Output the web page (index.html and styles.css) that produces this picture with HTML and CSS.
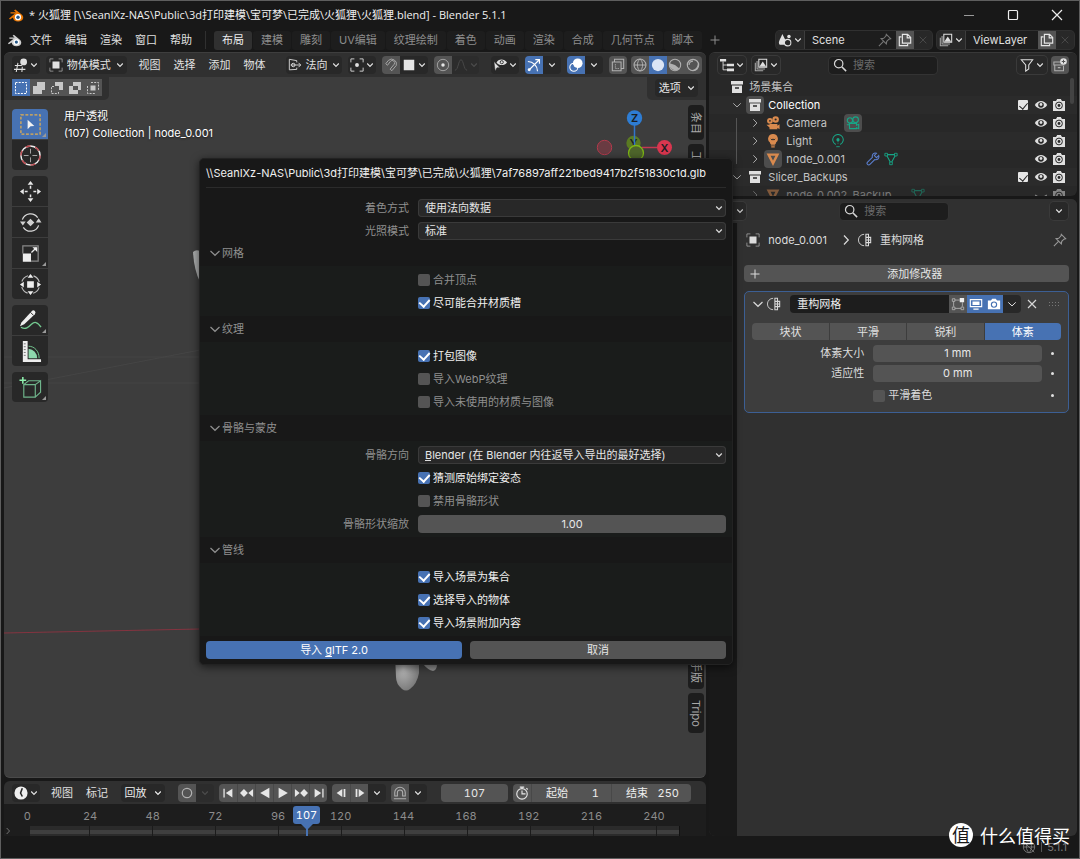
FILE: index.html
```html
<!DOCTYPE html>
<html lang="zh-CN">
<head>
<meta charset="utf-8">
<meta name="viewport" content="width=device-width, initial-scale=1">
<title>火狐狸.blend - Blender 5.1.1</title>
<link rel="stylesheet" href="styles.css">
</head>
<body>
<svg class="sprite" aria-hidden="true">
  <symbol id="chev" viewBox="0 0 8 8"><path d="M1.2 2.5 4 5.3 6.8 2.5" fill="none" stroke="currentColor" stroke-width="1.2"/></symbol>
  <symbol id="chevd" viewBox="0 0 12 12"><path d="M1.5 4 6 8.3 10.500 4" fill="none" stroke="currentColor" stroke-width="1.2"/></symbol>
  <symbol id="chevr" viewBox="0 0 12 12"><path d="M4 1.500 8.300 6 4 10.500" fill="none" stroke="currentColor" stroke-width="1.2"/></symbol>
  <symbol id="logo" viewBox="0 0 16 14"><path d="M1 10.500 7 5.600H2.500V4.300h5.600L6 2.500 7.300 1.500l5.800 4.600c1.500 1.200 2.300 2.400 2.100 4-.3 2.200-2.400 3.500-5.100 3.500-2.900 0-5-1.600-5.100-4L2 11.600z" fill="currentColor"/><circle class="logo-ring" cx="10" cy="9.200" r="3.100"/><circle class="logo-eye" cx="10" cy="9.200" r="1.700"/></symbol>
  <symbol id="editor3d" viewBox="0 0 16 16"><path d="M1 8.500h8M0 13h13M4.500 5.500 2.500 16M9.500 10 9 16" fill="none" stroke="currentColor" stroke-width="1.200"/><circle cx="11" cy="4.500" r="3.900" fill="currentColor"/></symbol>
  <symbol id="objmode" viewBox="0 0 16 16"><path d="M1 5V1h4M11 1h4v4M15 11v4h-4M5 15H1v-4" fill="none" stroke="currentColor" opacity=".6"/><rect x="4" y="4" width="8" height="8" fill="currentColor"/></symbol>
  <symbol id="orient" viewBox="0 0 16 16"><path d="M10 5V3L1.500 1.500v12L10 13v-2M3 8h11.500M12 5.500 14.500 8 12 10.500" fill="none" stroke="currentColor"/><circle cx="6" cy="8" r="2" fill="none" stroke="currentColor"/></symbol>
  <symbol id="pivot" viewBox="0 0 16 16"><path d="M1 5V1h4M11 1h4v4M15 11v4h-4M5 15H1v-4" fill="none" stroke="currentColor"/><circle cx="8" cy="8" r="2.200" fill="currentColor"/></symbol>
  <symbol id="magnet" viewBox="0 0 16 16"><path d="M2 6.500 5 2.800a5.500 5.500 0 0 1 9 5.700l-5 6-2-1.700 4.600-5.600a2.700 2.700 0 0 0-4.300-3.300L4 8.300z" fill="none" stroke="currentColor"/></symbol>
  <symbol id="square" viewBox="0 0 16 16"><rect x="2" y="2" width="12" height="12" fill="#e6e6e6"/></symbol>
  <symbol id="prop" viewBox="0 0 16 16"><circle cx="8" cy="8" r="6.500" fill="none" stroke="currentColor" opacity=".6"/><circle cx="8" cy="8" r="2" fill="currentColor"/></symbol>
  <symbol id="bell" viewBox="0 0 16 16"><path d="M1 14c4 0 4-12 7-12s3 12 7 12" fill="none" stroke="currentColor"/></symbol>
  <symbol id="vis" viewBox="0 0 16 16"><path d="M4 5c2-4.500 9-4.500 12 0-3 4-9 4-12 0z" fill="currentColor"/><circle cx="10" cy="4.800" r="1.800" fill="none" stroke="#282828"/><path d="M1 4l7 7-3.500.2L2.500 15z" fill="currentColor" stroke="#282828" stroke-width=".6"/></symbol>
  <symbol id="gizmo" viewBox="0 0 16 16"><path d="M1 4c6 0 11 5 11 11M2 14 14 2M9.500 1.800H14.200V6.500" fill="none" stroke="currentColor" stroke-width="1.300"/><circle cx="2.500" cy="13.500" r="1.700" fill="currentColor"/></symbol>
  <symbol id="overlay" viewBox="0 0 16 16"><circle cx="10" cy="6" r="5.500" fill="currentColor"/><circle cx="5.500" cy="10.500" r="4.600" fill="none" stroke="currentColor" stroke-width="1.200"/><path d="M5 8.500a3 3 0 0 0 3.500 3" stroke="#4772b3" fill="none"/></symbol>
  <symbol id="xray" viewBox="0 0 16 16"><path d="M4 4V1.500h10.500V12H12M1.500 4.500H11.500v10H1.500z" fill="none" stroke="currentColor" stroke-width="1.200"/><path d="M5 7v5h4" fill="none" stroke="currentColor" stroke-dasharray="1.500 1"/></symbol>
  <symbol id="wire" viewBox="0 0 16 16"><circle cx="8" cy="8" r="6.800" fill="none" stroke="currentColor" stroke-width="1.200"/><path d="M1 8h14M8 1C4 5 4 11 8 15M8 1c4 4 4 10 0 14" fill="none" stroke="currentColor" stroke-width="1.100"/></symbol>
  <symbol id="solid" viewBox="0 0 16 16"><circle cx="8" cy="8" r="7" fill="#dbe5f5"/></symbol>
  <symbol id="matl" viewBox="0 0 16 16"><circle cx="8" cy="8" r="6.500" fill="none" stroke="currentColor" stroke-width="1.200"/><path d="M8 1.500v6.500l5 4A6.500 6.500 0 0 1 2 6L8 8z" fill="currentColor"/></symbol>
  <symbol id="rend" viewBox="0 0 16 16"><circle cx="8" cy="8" r="6.500" fill="none" stroke="currentColor" stroke-width="1.300"/><path d="M3.500 8A4.500 4.500 0 0 1 8 3.500" fill="none" stroke="currentColor" stroke-width="1.300"/><path d="M13.500 6a6 6 0 0 1-8 8c4 0 8-3 8-8z" fill="currentColor"/></symbol>
  <symbol id="scene" viewBox="0 0 16 16"><path d="M5 1 9 9a4 4 0 0 1-2 4.500H2C-.5 11 2 8 5 1z" fill="currentColor"/><circle cx="11" cy="11" r="3.700" fill="#282828" stroke="currentColor" stroke-width="1.200"/><circle cx="12.500" cy="4" r="2" fill="currentColor"/></symbol>
  <symbol id="pin" viewBox="0 0 16 16"><path d="M9.500 1.500 14.500 6.500 12.500 7 10 9.500 9.500 12.500 3.500 6.500 6.500 6 9 3.500zM6 9.800 1 15" fill="none" stroke="currentColor" stroke-width="1.200"/></symbol>
  <symbol id="copy" viewBox="0 0 16 16"><path d="M5 1.500h6l3.500 3.500v6.500H5zM10.500 1.500V5.500h4" fill="none" stroke="currentColor" stroke-width="1.300"/><path d="M4 4.500H1.500v10H11v-2" fill="none" stroke="currentColor" stroke-width="1.300"/></symbol>
  <symbol id="close" viewBox="0 0 12 12"><path d="m2 2 8 8M10 2l-8 8" fill="none" stroke="currentColor" stroke-width="1.200"/></symbol>
  <symbol id="layers" viewBox="0 0 16 16"><path d="M1.500 5.500v9h9M3.500 3.500v9h9" fill="none" stroke="currentColor" stroke-width="1.200" opacity=".7"/><path d="M5.500 1.500h9v9h-9z" fill="none" stroke="currentColor" stroke-width="1.200"/><path d="M6 10l4-6 4 6z" fill="currentColor"/></symbol>
  <symbol id="tree" viewBox="0 0 16 16"><path d="M0 1h7v3H0zM8 6.500h8v3H8zM8 12h8v3H8z" fill="currentColor"/><path d="M3.500 4v9.500H8M3.500 8H8" fill="none" stroke="currentColor"/></symbol>
  <symbol id="search" viewBox="0 0 16 16"><circle cx="6.500" cy="6.500" r="4.800" fill="none" stroke="currentColor" stroke-width="1.400"/><path d="m10 10 5 5" stroke="currentColor" stroke-width="1.700"/></symbol>
  <symbol id="filter" viewBox="0 0 16 16"><path d="M1.500 2h13L10 8v4.500L6.500 15V8z" fill="none" stroke="currentColor" stroke-width="1.200"/></symbol>
  <symbol id="coll" viewBox="0 0 14 14"><path d="M1 1h12v3.500H1zM2 5.500h10V13H2z" fill="currentColor"/><path d="M5 8h4" stroke="#282828" stroke-width="1.300"/></symbol>
  <symbol id="newcoll" viewBox="0 0 16 16"><path d="M9 4.500H1V8h12M2 8v6.500h10V9M5.500 11h3" fill="none" stroke="currentColor" stroke-width="1.200"/><circle cx="12" cy="4" r="3.800" fill="#e0e0e0"/><path d="M12 2v4M10 4h4" stroke="#545454" stroke-width="1.200"/></symbol>
  <symbol id="eye" viewBox="0 0 14 14"><path d="M.8 7C4 1.800 10 1.800 13.200 7 10 12 4 12 .8 7z" fill="currentColor"/><circle cx="7" cy="7" r="2.800" fill="#282828"/><circle cx="7" cy="6.500" r="1.400" fill="currentColor"/></symbol>
  <symbol id="cam" viewBox="0 0 14 14"><path d="M1 3h3l1.200-2h3.600L10 3h3v10H1z" fill="currentColor"/><circle cx="7" cy="7.500" r="3.400" fill="none" stroke="#282828"/><circle cx="7" cy="7.500" r="1.400" fill="#282828"/></symbol>
  <symbol id="movie" viewBox="0 0 16 16"><circle cx="4.500" cy="5.500" r="3.300" fill="currentColor"/><circle cx="11" cy="4" r="3.700" fill="currentColor"/><circle cx="4.500" cy="5.500" r="1" fill="#282828"/><circle cx="11" cy="4" r="1.200" fill="#282828"/><path d="M4 9h9v2l2.500-1.500v5.500L13 13.500v1.500H4zM.500 10H4v3z" fill="currentColor"/></symbol>
  <symbol id="movieo" viewBox="0 0 16 16"><circle cx="4.500" cy="5" r="3" fill="none" stroke="currentColor" stroke-width="1.300"/><circle cx="11" cy="4.200" r="3.200" fill="none" stroke="currentColor" stroke-width="1.300"/><path d="M4 8.500h8v2l2.500-1v5L12 13.500v1H4zM1 10h3" fill="none" stroke="currentColor" stroke-width="1.300"/></symbol>
  <symbol id="bulb" viewBox="0 0 16 16"><path d="M8 0a5.500 5.500 0 0 1 3.500 9.800L11 11.500H5L4.500 9.800A5.500 5.500 0 0 1 8 0z" fill="currentColor"/><path d="M5.500 12.500h5M6 14.800h4" stroke="currentColor" stroke-width="1.400"/><path d="M5.500 5.500 7 7l1-1.500L9 7l1.500-1.500" fill="none" stroke="#282828"/></symbol>
  <symbol id="lightd" viewBox="0 0 16 16"><path d="M5.500 12a6 6 0 1 1 5 0" fill="none" stroke="currentColor" stroke-width="1.200"/><circle cx="8" cy="6.500" r="1.800" fill="currentColor"/><path d="M8 8v3" stroke="currentColor" stroke-dasharray="1 1"/><path d="M6 14.500h4" stroke="currentColor"/></symbol>
  <symbol id="mesh" viewBox="0 0 16 16"><path d="M3 3h10L8 12.800z" fill="none" stroke="currentColor" stroke-width="2.800"/></symbol>
  <symbol id="meshd" viewBox="0 0 16 16"><path d="M2.500 3h11L8 13z" fill="none" stroke="currentColor" stroke-width="1.200"/><path d="M1 1.500h3v3H1zM12 1.500h3v3h-3zM6.500 11.500h3v3h-3z" fill="#282828" stroke="currentColor"/></symbol>
  <symbol id="wrench" viewBox="0 0 16 16"><path d="M14.500 4 12 6.500 9.500 4 12 1.500C9 .5 6.500 3 7.300 6L1.800 11.500a1.800 1.800 0 0 0 2.700 2.700L10 8.700c3 .8 5.500-1.700 4.500-4.700z" fill="none" stroke="currentColor" stroke-width="1.200"/></symbol>
  <symbol id="remesh" viewBox="0 0 16 16"><path d="M7 1.500a6.500 6.500 0 0 0 0 13" fill="none" stroke="currentColor"/><path d="M9 1.500h3V5h2.500v6H12v3.500H9zM9 5h3M9 11h3M9 8h5.500M12 5v6" fill="none" stroke="currentColor" stroke-width="1.200"/></symbol>
  <symbol id="propicon" viewBox="0 0 16 16"><path d="M1 4h6M1 12h6" stroke="currentColor"/><circle cx="11" cy="4" r="3" fill="none" stroke="currentColor" stroke-width="1.300"/><circle cx="11" cy="12" r="3" fill="none" stroke="currentColor" stroke-width="1.300"/></symbol>
  <symbol id="editm" viewBox="0 0 16 16"><path d="M4 3.500h6M3 5v6M4.500 13h7M13 6v5" stroke="currentColor"/><path d="M1.500 2h3v3h-3zM1.500 11.500h3v3h-3zM11.500 11.500h3v3h-3z" fill="none" stroke="currentColor"/><path d="M10 1h5v5h-5z" fill="#f0f0f0"/></symbol>
  <symbol id="monitor" viewBox="0 0 16 16"><path d="M1.500 3h13v8h-13z" fill="none" stroke="currentColor" stroke-width="1.300"/><path d="M4 5.200h8V9H4zM5 13h6v1.500H5z" fill="currentColor"/></symbol>
  <symbol id="camb" viewBox="0 0 16 16"><path d="M1 4h3.500L6 2h4l1.500 2H15v10H1z" fill="currentColor"/><circle cx="8" cy="8.700" r="3" fill="none" stroke="#4772b3" stroke-width="1.300"/></symbol>
  <symbol id="clockf" viewBox="0 0 16 16"><circle cx="8" cy="8" r="7.500" fill="#eee"/><path d="M9.500 2.500 7.500 8l2 4" fill="none" stroke="#282828" stroke-width="1.800"/></symbol>
  <symbol id="watch" viewBox="0 0 16 16"><circle cx="8" cy="9" r="6" fill="none" stroke="currentColor" stroke-width="1.300"/><path d="M8 5v4h4M5.500 1.300h5M8 1v2M13 2.500l1.500 1.500" fill="none" stroke="currentColor" stroke-width="1.300"/></symbol>
  <symbol id="snapm" viewBox="0 0 16 16"><path d="M2 11.500V7.500a6 6 0 0 1 12 0v4h-3V7.500a3 3 0 0 0-6 0v4zM1 14.500h14" fill="none" stroke="currentColor" stroke-width="1.200"/></symbol>
  <symbol id="first" viewBox="0 0 16 16"><path d="M3.500 3v10" stroke="currentColor" stroke-width="1.500"/><path d="M13 3v10L5.500 8z" fill="currentColor"/></symbol>
  <symbol id="last" viewBox="0 0 16 16"><path d="M12.500 3v10" stroke="currentColor" stroke-width="1.500"/><path d="M3 3v10l7.500-5z" fill="currentColor"/></symbol>
  <symbol id="pkey" viewBox="0 0 16 16"><path d="M0 8l4.500-4.500L9 8l-4.500 4.500zM15 3.500v9L9.500 8z" fill="currentColor"/></symbol>
  <symbol id="nkey" viewBox="0 0 16 16"><path d="M16 8l-4.500-4.500L7 8l4.500 4.500zM1 3.500v9L6.500 8z" fill="currentColor"/></symbol>
  <symbol id="rev" viewBox="0 0 16 16"><path d="M13 2v12L2.500 8z" fill="currentColor"/></symbol>
  <symbol id="play" viewBox="0 0 16 16"><path d="M3 2v12l10.500-6z" fill="currentColor"/></symbol>
  <symbol id="stepb" viewBox="0 0 16 16"><path d="M9.500 3.500v9L3 8zM11 3.500h2v9h-2z" fill="currentColor"/></symbol>
  <symbol id="stepf" viewBox="0 0 16 16"><path d="M6.500 3.500v9L13 8zM3 3.500h2v9H3z" fill="currentColor"/></symbol>
  <symbol id="offline" viewBox="0 0 16 16"><circle cx="8" cy="8" r="6.500" fill="none" stroke="currentColor"/><path d="M1.500 8h13M8 1.500c-4 4-4 9 0 13M8 1.500c4 4 4 9 0 13M2 2l12 12" fill="none" stroke="currentColor"/></symbol>
</svg>

<div class="window">
  <header class="titlebar">
    <svg class="app-logo"><use href="#logo"/></svg>
    <h1>* 火狐狸 [\\SeanIXz-NAS\Public\3d打印建模\宝可梦\已完成\火狐狸\火狐狸.blend] - Blender 5.1.1</h1>
    <div class="win-controls">
      <button aria-label="最小化"><svg viewBox="0 0 12 12"><path d="M1 6.500h10" stroke="#999"/></svg></button>
      <button aria-label="最大化"><svg viewBox="0 0 12 12"><rect x="1.500" y="1.500" width="9" height="9" rx="1" fill="none" stroke="#eee" stroke-width="1.200"/></svg></button>
      <button aria-label="关闭"><svg viewBox="0 0 12 12"><path d="m1 1 10 10M11 1 1 11" stroke="#eee" stroke-width="1.200"/></svg></button>
    </div>
  </header>

  <div class="topbar">
    <nav class="menus">
      <button aria-label="Blender"><svg class="mono-logo"><use href="#logo"/></svg></button>
      <button>文件</button><button>编辑</button><button>渲染</button><button>窗口</button><button>帮助</button>
    </nav>
    <div class="workspaces" role="tablist">
      <button role="tab" class="on" aria-selected="true">布局</button><button role="tab">建模</button><button role="tab">雕刻</button><button role="tab">UV编辑</button><button role="tab">纹理绘制</button><button role="tab">着色</button><button role="tab">动画</button><button role="tab">渲染</button><button role="tab">合成</button><button role="tab">几何节点</button><button role="tab">脚本</button><button class="add-tab" aria-label="添加工作区"><svg class="i12" viewBox="0 0 12 12"><path d="M6 1.500v9M1.500 6h9" stroke="currentColor"/></svg></button>
    </div>
    <div class="datablocks">
      <div class="idrow">
        <button class="dd" aria-label="场景"><svg class="i14"><use href="#scene"/></svg><svg class="i8"><use href="#chev"/></svg></button>
        <label class="idname scene"><input value="Scene" aria-label="场景名称"><svg class="i14 dim"><use href="#pin"/></svg></label>
        <button class="tool" aria-label="新建场景"><svg class="i14"><use href="#copy"/></svg></button>
        <button class="off" aria-label="删除场景"><svg class="i10"><use href="#close"/></svg></button>
      </div>
      <div class="idrow">
        <button class="dd" aria-label="视图层"><svg class="i14"><use href="#layers"/></svg><svg class="i8"><use href="#chev"/></svg></button>
        <label class="idname layer"><input value="ViewLayer" aria-label="视图层名称"></label>
        <button class="tool" aria-label="新建视图层"><svg class="i14"><use href="#copy"/></svg></button>
        <button class="off" aria-label="删除视图层"><svg class="i10"><use href="#close"/></svg></button>
      </div>
    </div>
  </div>

  <main class="areas">
    <div class="col-left">
      <section class="viewport">
        <svg class="scene3d" width="703" height="725" viewBox="4 53 703 725" aria-hidden="true">
          <defs><radialGradient id="foot" cx=".35" cy=".4" r=".7"><stop offset="0" stop-color="#b5b5b5"/><stop offset="1" stop-color="#747474"/></radialGradient></defs>
          <path d="M4 357H200M4 383H200M4 388 200 350" stroke="#454545" fill="none"/>
          <path d="M4 633 200 629" stroke="#843440" fill="none"/>
          <path d="M193 252q3-3 7-1v31q-6-12-7-30z" fill="#a9abab"/>
          <path d="M395 655h24v18q-2 11-9 16-4 3-8 0-6-5-6-12z" fill="url(#foot)"/>
          <path d="M423 664h14q0 6-4 7-5-1-10-7z" fill="#8f8f8f"/>
        </svg>
        <div class="hdr vhdr">
          <button class="dd" aria-label="编辑器类型"><svg class="i14"><use href="#editor3d"/></svg><svg class="i8"><use href="#chev"/></svg></button>
          <div class="selwrap mode"><svg class="i14"><use href="#objmode"/></svg><select aria-label="模式"><option>物体模式</option></select><svg class="i8"><use href="#chev"/></svg></div>
          <nav class="menus vmenus"><button>视图</button><button>选择</button><button>添加</button><button>物体</button></nav>
          <div class="selwrap orient"><svg class="i14"><use href="#orient"/></svg><select aria-label="变换坐标系"><option>法向</option></select><svg class="i8"><use href="#chev"/></svg></div>
          <button class="dd" aria-label="轴心点"><svg class="i14"><use href="#pivot"/></svg><svg class="i8"><use href="#chev"/></svg></button>
          <div class="grp"><button class="tool" aria-label="吸附"><svg class="i14 soft"><use href="#magnet"/></svg></button><button class="dd" aria-label="吸附到"><svg class="i14"><use href="#square"/></svg><svg class="i8"><use href="#chev"/></svg></button></div>
          <div class="grp"><button class="tool" aria-label="衰减编辑"><svg class="i14"><use href="#prop"/></svg></button><button class="dd faded" aria-label="衰减"><svg class="i14"><use href="#bell"/></svg><svg class="i8"><use href="#chev"/></svg></button></div>
          <div class="push"></div>
          <button class="dd" aria-label="可见性"><svg class="i14"><use href="#vis"/></svg><svg class="i8"><use href="#chev"/></svg></button>
          <div class="grp"><button class="tool on" aria-label="Gizmo"><svg class="i14"><use href="#gizmo"/></svg></button><button class="arrow" aria-label="Gizmo 选项"><svg class="i8"><use href="#chev"/></svg></button></div>
          <div class="grp"><button class="tool on" aria-label="叠加层"><svg class="i14"><use href="#overlay"/></svg></button><button class="arrow" aria-label="叠加层选项"><svg class="i8"><use href="#chev"/></svg></button></div>
          <div class="grp"><button class="tool" aria-label="透视模式"><svg class="i14 soft"><use href="#xray"/></svg></button></div>
          <div class="grp"><button class="tool" aria-label="线框"><svg class="i14 soft"><use href="#wire"/></svg></button><button class="tool on" aria-label="实体"><svg class="i14"><use href="#solid"/></svg></button><button class="tool" aria-label="材质预览"><svg class="i14 soft"><use href="#matl"/></svg></button><button class="tool" aria-label="渲染"><svg class="i14 soft"><use href="#rend"/></svg></button></div>
        </div>
        <div class="row2">
          <div class="selmodes grp">
            <button class="tool on" aria-label="设置"><svg class="i14" viewBox="0 0 14 14"><rect x="1.500" y="1.500" width="11" height="11" fill="none" stroke="#fff" stroke-dasharray="2 1.200"/></svg></button><button class="tool" aria-label="扩展"><svg class="i14" viewBox="0 0 14 14"><path d="M5 1h8v8h-3v4H1V5h4z" fill="#c8c8c8"/></svg></button><button class="tool" aria-label="减去"><svg class="i14" viewBox="0 0 14 14"><path d="M5 1h8v8H9V5H5z" fill="#c8c8c8"/><path d="M4 5.500H1.500v7h7V10" fill="none" stroke="#c8c8c8" stroke-dasharray="2 1.200"/></svg></button><button class="tool" aria-label="差值"><svg class="i14" viewBox="0 0 14 14"><path d="M5 1h8v8h-3v4H1V5h4zM5 5v4h5V5z" fill="#c8c8c8" fill-rule="evenodd"/></svg></button><button class="tool" aria-label="交集"><svg class="i14" viewBox="0 0 14 14"><rect x="4.500" y="4.500" width="5" height="5" fill="#c8c8c8"/><path d="M5 1.500h7.500V9M1.500 5v7.500H9" fill="none" stroke="#c8c8c8" stroke-dasharray="2 1.200"/></svg></button>
          </div>
          <div class="options"><button>选项<svg class="i8"><use href="#chev"/></svg></button></div>
        </div>
        <div class="vbody">
          <div class="toolbar">
            <div class="tgroup">
              <button class="on more" aria-label="框选"><svg viewBox="0 0 24 24"><rect x="2" y="2" width="20" height="20" fill="none" stroke="#e5b04d" stroke-width="1.300" stroke-dasharray="3 1.700"/><path d="M9 7l7 6.500-4 .3L9 17z" fill="#f2f2f2"/></svg></button>
              <button aria-label="游标"><svg viewBox="0 0 24 24"><circle cx="12" cy="12" r="10" fill="none" stroke="#eee" stroke-width="1.500"/><circle cx="12" cy="12" r="10" fill="none" stroke="#b8444b" stroke-width="1.500" stroke-dasharray="5.200"/><path d="M12 5v5M12 14v5M5 12h5M14 12h5" stroke="#aaa"/></svg></button>
            </div>
            <div class="tgroup">
              <button aria-label="移动"><svg viewBox="0 0 24 24"><path d="M12 1l3 4H9zM12 23l3-4H9zM1 12l4-3v6zM23 12l-4-3v6z" fill="#e8e8e8"/><path d="M12 6v3M12 15v3M6 12h3M15 12h3" stroke="#e8e8e8" stroke-width="1.600"/></svg></button>
              <button aria-label="旋转"><svg viewBox="0 0 24 24"><path d="M3.500 9a9 9 0 0 1 16-2M20.500 15a9 9 0 0 1-16 2" fill="none" stroke="#d8d8d8" stroke-width="1.300"/><path d="M1 11h6l-3 4zM17.500 12h6l-3-4.500zM12 8l4 4-4 4-4-4z" fill="#d0d0d0"/></svg></button>
              <button class="more" aria-label="缩放"><svg viewBox="0 0 24 24"><path d="M4 12V4h16v16h-8" fill="none" stroke="#888" stroke-width="1.300"/><path d="M4 12h8.500v8.500H4zM14 5.500h5v5z" fill="#eee"/><path d="M13 11l5-5" stroke="#eee" stroke-width="1.300"/></svg></button>
              <button aria-label="变换"><svg viewBox="0 0 24 24"><circle cx="12" cy="12" r="9.500" fill="none" stroke="#bbb" stroke-width="1.200" stroke-dasharray="9 5.900" stroke-dashoffset="-3"/><path d="M8.500 8.500h7v7h-7zM12 1l3 4H9zM12 23l3-4H9zM1 12l4-3v6zM23 12l-4-3v6z" fill="#eee"/></svg></button>
            </div>
            <div class="tgroup">
              <button class="more" aria-label="标注"><svg viewBox="0 0 24 24"><path d="M2.500 14 13 2.500q2-2 3.500-.5t0 3.500L5.500 16 1 18z" fill="#eee"/><path d="M12 3.500l3 3" stroke="#282828"/><path d="M2 19c5 3 8 0 11-3s6-3 10 3" fill="none" stroke="#73c990" stroke-width="1.400"/></svg></button>
              <button aria-label="测量"><svg viewBox="0 0 24 24"><path d="M4 1h5v19h14v3H4z" fill="#eee"/><path d="M10 9a10 10 0 0 1 9 10h-9z" fill="#8dd9ad"/><path d="M10 6.500c6 0 11 5 11 12.500" fill="none" stroke="#73c990"/><path d="M5 4h2M5 7h2M5 10h2M5 13h2M5 16h2" stroke="#777"/></svg></button>
            </div>
            <div class="tgroup">
              <button class="more" aria-label="添加立方体"><svg viewBox="0 0 24 24"><path d="M5 9h12v13H5zM5 9l5-4h12.500M17 9l5.500-4v12L17 22" fill="none" stroke="#6fb58c" stroke-width="1.200"/><path d="M4 1v7M.500 4.500h7" stroke="#8ff0ae" stroke-width="1.600"/></svg></button>
            </div>
          </div>
          <div class="vinfo"><p>用户透视</p><p>(107) Collection | node_0.001</p></div>
        </div>
        <svg class="navgizmo" width="80" height="58" viewBox="595 108 80 58" role="img" aria-label="坐标轴">
          <path d="M642 147.500h20" stroke="#c43951" stroke-width="1.500"/>
          <circle cx="604.500" cy="147.500" r="7.200" fill="#6a3b42" stroke="#b23a4c"/>
          <circle cx="633.500" cy="143" r="7.200" fill="#5a7a22"/>
          <text x="633.500" y="146.500" text-anchor="middle" class="axis">Y</text>
          <path d="M634.500 124v21" stroke="#3275c9" stroke-width="1.500"/>
          <circle cx="636" cy="153" r="7.500" fill="#4e652b" stroke="#7eb615" stroke-width="1.300"/>
          <circle cx="634.500" cy="118" r="7.700" fill="#2e7dd4"/><text x="634.500" y="122" text-anchor="middle" class="axis">Z</text>
          <circle cx="664.500" cy="147.500" r="7.500" fill="#d9364f"/><text x="664.500" y="151.500" text-anchor="middle" class="axis">X</text>
        </svg>
        <div class="sidetabs top"><button>条目</button><button>工具</button></div>
        <div class="sidetabs bottom"><button class="tall">手版</button><button class="tripo">Tripo</button></div>
      </section>

      <section class="timeline">
        <div class="hdr thdr">
          <button class="dd" aria-label="编辑器类型"><svg class="i14"><use href="#clockf"/></svg><svg class="i8"><use href="#chev"/></svg></button>
          <nav class="menus tmenus"><button>视图</button><button>标记</button></nav>
          <button class="playback">回放<svg class="i8"><use href="#chev"/></svg></button>
          <div class="grp rec"><button class="tool" aria-label="自动插帧"><svg class="i14 soft" viewBox="0 0 14 14"><circle cx="7" cy="7" r="4.700" fill="none" stroke="currentColor" stroke-width="1.200"/></svg></button><button class="arrow faded" aria-label="插帧选项"><svg class="i8"><use href="#chev"/></svg></button></div>
          <div class="grp lined"><button class="tool" aria-label="首帧"><svg class="i14"><use href="#first"/></svg></button><button class="tool" aria-label="上一关键帧"><svg class="i14"><use href="#pkey"/></svg></button><button class="tool" aria-label="倒放"><svg class="i14"><use href="#rev"/></svg></button><button class="tool" aria-label="播放"><svg class="i14"><use href="#play"/></svg></button><button class="tool" aria-label="下一关键帧"><svg class="i14"><use href="#nkey"/></svg></button><button class="tool" aria-label="末帧"><svg class="i14"><use href="#last"/></svg></button></div>
          <div class="grp lined"><button class="tool" aria-label="后退"><svg class="i14"><use href="#stepb"/></svg></button><button class="tool" aria-label="前进"><svg class="i14"><use href="#stepf"/></svg></button><button class="arrow" aria-label="步进选项"><svg class="i8"><use href="#chev"/></svg></button></div>
          <div class="grp"><button class="tool" aria-label="吸附"><svg class="i14 soft"><use href="#snapm"/></svg></button><button class="arrow" aria-label="吸附选项"><svg class="i8"><use href="#chev"/></svg></button></div>
          <input class="frame" value="107" aria-label="当前帧">
          <div class="grp range"><button class="tool" aria-label="预览范围"><svg class="i14"><use href="#watch"/></svg></button><label>起始<input value="1"></label><label>结束<input value="250"></label></div>
        </div>
        <ol class="ruler"><li>0</li><li>24</li><li>48</li><li>72</li><li>96</li><li>120</li><li>144</li><li>168</li><li>192</li><li>216</li><li>240</li></ol>
        <div class="track"><svg class="i12"><use href="#chevr"/></svg><div class="strip"></div></div>
        <div class="playhead"><span>107</span></div>
      </section>
    </div>

    <div class="col-right">
      <section class="outliner">
        <div class="hdr ohdr">
          <button class="dd line" aria-label="编辑器类型"><svg class="i14"><use href="#tree"/></svg><svg class="i8"><use href="#chev"/></svg></button>
          <button class="dd line" aria-label="显示模式"><svg class="i14"><use href="#layers"/></svg><svg class="i8"><use href="#chev"/></svg></button>
          <label class="search"><svg class="i14"><use href="#search"/></svg><input placeholder="搜索" aria-label="搜索大纲"></label>
          <div class="ohr"><button class="dd line" aria-label="过滤"><svg class="i14"><use href="#filter"/></svg><svg class="i8"><use href="#chev"/></svg></button><button class="tool solo" aria-label="新建集合"><svg class="i14 soft"><use href="#newcoll"/></svg></button></div>
        </div>
        <ul class="tree">
          <li class="d0"><svg class="i14"><use href="#coll"/></svg><span>场景集合</span></li>
          <li class="d1"><svg class="i10 tw"><use href="#chevd"/></svg><i class="act"><svg class="i14"><use href="#coll"/></svg></i><span class="hot">Collection</span><div class="tog"><input type="checkbox" checked aria-label="启用 Collection"><svg><use href="#eye"/></svg><svg><use href="#cam"/></svg></div></li>
          <li class="d2"><svg class="i10 tw"><use href="#chevr"/></svg><i class="orange"><svg class="i14"><use href="#movie"/></svg></i><span>Camera</span><i class="act teal"><svg class="i14"><use href="#movieo"/></svg></i><div class="tog"><svg><use href="#eye"/></svg><svg><use href="#cam"/></svg></div></li>
          <li class="d2"><svg class="i10 tw"><use href="#chevr"/></svg><i class="orange"><svg class="i14"><use href="#bulb"/></svg></i><span>Light</span><i class="teal"><svg class="i14"><use href="#lightd"/></svg></i><div class="tog"><svg><use href="#eye"/></svg><svg><use href="#cam"/></svg></div></li>
          <li class="d2"><svg class="i10 tw"><use href="#chevr"/></svg><i class="act orange"><svg class="i14"><use href="#mesh"/></svg></i><span>node_0.001</span><i class="bluei"><svg class="i14"><use href="#wrench"/></svg></i><i class="teal tight"><svg class="i14"><use href="#meshd"/></svg></i><div class="tog"><svg><use href="#eye"/></svg><svg><use href="#cam"/></svg></div></li>
          <li class="d1"><svg class="i10 tw"><use href="#chevd"/></svg><i><svg class="i14"><use href="#coll"/></svg></i><span>Slicer_Backups</span><div class="tog"><input type="checkbox" checked aria-label="启用 Slicer_Backups"><svg><use href="#eye"/></svg><svg><use href="#cam"/></svg></div></li>
          <li class="d2 ghost"><svg class="i10 tw"><use href="#chevr"/></svg><i class="orange"><svg class="i14"><use href="#mesh"/></svg></i><span>node_0.002_Backup</span><i class="teal"><svg class="i14"><use href="#meshd"/></svg></i><div class="tog"><svg viewBox="0 0 12 12"><path d="M1 6q5 4 10 0" fill="none" stroke="currentColor"/></svg><svg><use href="#cam"/></svg></div></li>
        </ul>
        <div class="guide"></div>
        <div class="scroll"></div>
      </section>

      <section class="properties">
        <div class="hdr phdr">
          <button class="dd line" aria-label="编辑器类型"><svg class="i14"><use href="#propicon"/></svg><svg class="i8"><use href="#chev"/></svg></button>
          <label class="search"><svg class="i14"><use href="#search"/></svg><input placeholder="搜索" aria-label="搜索属性"></label>
          <button class="arrow line" aria-label="选项"><svg class="i8"><use href="#chev"/></svg></button>
        </div>
        <div class="pmain">
          <div class="ptabs"></div>
          <div class="pbody">
            <div class="crumbs"><svg class="i14"><use href="#objmode"/></svg><span class="obj">node_0.001</span><svg class="i12"><use href="#chevr"/></svg><svg class="i14"><use href="#remesh"/></svg><span class="cur">重构网格</span><svg class="i14 pinr"><use href="#pin"/></svg></div>
            <button class="addmod"><svg class="i12" viewBox="0 0 12 12"><path d="M6 1.500v9M1.500 6h9" stroke="#ddd"/></svg>添加修改器</button>
            <div class="modifier">
              <div class="mhead">
                <svg class="i12"><use href="#chevd"/></svg><svg class="i14"><use href="#remesh"/></svg>
                <div class="grp mname"><input value="重构网格" aria-label="修改器名称"><button class="tool" aria-label="编辑模式"><svg class="i14 soft"><use href="#editm"/></svg></button><button class="tool on" aria-label="视图显示"><svg class="i14"><use href="#monitor"/></svg></button><button class="tool on" aria-label="渲染显示"><svg class="i14"><use href="#camb"/></svg></button><button class="arrow" aria-label="更多"><svg class="i10"><use href="#chevd"/></svg></button></div>
                <button class="bare" aria-label="移除"><svg class="i12"><use href="#close"/></svg></button>
                <svg class="grip" viewBox="0 0 12 6"><path d="M0 1.500h12M0 4.500h12" stroke="#777" stroke-dasharray="1 2"/></svg>
              </div>
              <div class="seg"><button>块状</button><button>平滑</button><button>锐利</button><button class="on">体素</button></div>
              <div class="prow"><label for="vs">体素大小</label><input id="vs" class="num" value="1 mm"><b></b></div>
              <div class="prow"><label for="ad">适应性</label><input id="ad" class="num" value="0 mm"><b></b></div>
              <div class="prow chk"><span></span><label class="check"><input type="checkbox">平滑着色</label><b></b></div>
            </div>
          </div>
        </div>
      </section>
    </div>
  </main>

  <footer class="statusbar"><svg class="i14"><use href="#offline"/></svg><span class="bar"></span><span>5.1.1</span></footer>

  <div class="dialog" role="dialog" aria-labelledby="dlg-title">
    <h2 id="dlg-title">\\SeanIXz-NAS\Public\3d打印建模\宝可梦\已完成\火狐狸\7af76897aff221bed9417b2f51830c1d.glb</h2>
    <div class="rows intro">
      <div class="frow"><label for="shade">着色方式</label><div class="sel"><select id="shade"><option>使用法向数据</option></select><svg class="i8"><use href="#chev"/></svg></div></div>
      <div class="frow"><label for="lightm">光照模式</label><div class="sel"><select id="lightm"><option>标准</option></select><svg class="i8"><use href="#chev"/></svg></div></div>
    </div>
    <h3><svg class="i12"><use href="#chevd"/></svg>网格</h3>
    <div class="rows">
      <label class="check"><input type="checkbox">合并顶点</label>
      <label class="check lit"><input type="checkbox" checked>尽可能合并材质槽</label>
    </div>
    <h3><svg class="i12"><use href="#chevd"/></svg>纹理</h3>
    <div class="rows">
      <label class="check lit"><input type="checkbox" checked>打包图像</label>
      <label class="check"><input type="checkbox">导入WebP纹理</label>
      <label class="check"><input type="checkbox">导入未使用的材质与图像</label>
    </div>
    <h3><svg class="i12"><use href="#chevd"/></svg>骨骼与蒙皮</h3>
    <div class="rows">
      <div class="frow"><label for="bone">骨骼方向</label><div class="sel mnemonic"><select id="bone"><option>Blender (在 Blender 内往返导入导出的最好选择)</option></select><svg class="i8"><use href="#chev"/></svg></div></div>
      <label class="check lit"><input type="checkbox" checked>猜测原始绑定姿态</label>
      <label class="check"><input type="checkbox">禁用骨骼形状</label>
      <div class="frow"><label for="scale">骨骼形状缩放</label><input id="scale" class="num" value="1.00"></div>
    </div>
    <h3><svg class="i12"><use href="#chevd"/></svg>管线</h3>
    <div class="rows">
      <label class="check lit"><input type="checkbox" checked>导入场景为集合</label>
      <label class="check lit"><input type="checkbox" checked>选择导入的物体</label>
      <label class="check lit"><input type="checkbox" checked>导入场景附加内容</label>
    </div>
    <div class="actions"><button class="primary">导入 <u>g</u>lTF 2.0</button><button>取消</button></div>
  </div>

  <div class="watermark"><span class="badge">值</span><span>什么值得买</span></div>
</div>
</body>
</html>
```

FILE: styles.css
```css
* { box-sizing: border-box; }
body { margin: 0; background: #181818; color: #d6d6d6; font: 11px/18px Inter, "Noto Sans CJK SC", sans-serif; }
button, input, select { font: inherit; color: inherit; border: 0; background: none; padding: 0; margin: 0; border-radius: 0; min-width: 0; }
button { display: flex; align-items: center; justify-content: center; white-space: nowrap; }
select { appearance: none; }
h1, h2, h3, p, ul, ol { margin: 0; padding: 0; font-weight: 400; font-size: 11px; list-style: none; }
svg { flex: none; display: block; }
i { font-style: normal; }
.sprite { position: absolute; width: 0; height: 0; }
.i8 { width: 8px; height: 8px; }
.i10 { width: 10px; height: 10px; }
.i12 { width: 12px; height: 12px; }
.i14 { width: 14px; height: 14px; }
.soft { color: #b0b0b0; }
.dim { color: #777; }

.window { position: relative; min-height: 100vh; display: flex; flex-direction: column; border: 1px solid #5e5e5e; padding: 0 2px; }

.titlebar { display: flex; align-items: center; height: 27px; padding: 0 5px; }
.app-logo { width: 16px; height: 14px; color: #ea7600; }
.logo-ring { fill: #fff; }
.logo-eye { fill: #265787; }
.titlebar h1 { margin-left: 5px; font: 11px/18px "Open Sans", "Noto Sans CJK SC", sans-serif; color: #f0f0f0; white-space: nowrap; }
.win-controls { display: flex; margin-left: auto; gap: 32px; padding-right: 9px; }
.win-controls svg { width: 12px; height: 12px; }

.topbar { display: flex; align-items: center; height: 24px; }
.menus { display: flex; gap: 13px; color: #e0e0e0; }
.topbar .menus { padding: 0 13px 0 4px; border-right: 1px solid #303030; }
.topbar .menus button:first-child { margin-right: -5px; }
.mono-logo { width: 15px; height: 14px; color: #cfcfcf; }
.mono-logo .logo-ring { fill: #181818; }
.mono-logo .logo-eye { fill: #cfcfcf; }
.workspaces { display: flex; gap: 1px; margin-left: 8px; color: #8d8d8d; }
.workspaces button { height: 19px; padding: 0 8px; border-radius: 3px; background: #1d1d1d; }
.workspaces .on { background: #303030; color: #eee; }
.workspaces .add-tab { padding: 0 6px; background: none; }
.datablocks { display: flex; gap: 5px; margin-left: auto; padding-right: 3px; }
.idrow { display: flex; height: 18px; border-radius: 4px; overflow: hidden; background: #282828; box-shadow: 0 0 0 1px #303030; }
.idname { display: flex; align-items: center; background: #1d1d1d; border-left: 1px solid #3d3d3d; padding: 0 4px 0 7px; }
.idname input { flex: 1; width: 20px; color: #e0e0e0; }
.scene { width: 92px; }
.layer { width: 73px; }
.off { width: 18px; color: #484848; }

.dd { height: 18px; width: 28px; background: #282828; border-radius: 4px; gap: 2px; color: #e0e0e0; }
.line { box-shadow: 0 0 0 1px #3a3a3a; }
.tool { width: 18px; height: 18px; background: #545454; color: #e6e6e6; }
.tool.on { background: #4772b3; color: #fff; }
.arrow { width: 18px; height: 18px; background: #282828; color: #e0e0e0; }
.faded { color: #4c4c4c; background: #2c2c2c; }
.grp { display: flex; height: 18px; border-radius: 4px; overflow: hidden; }
.grp .dd { border-radius: 0; }
.push { flex: 1; }
.hdr { display: flex; align-items: center; height: 24px; background: #303030; }

.areas { flex: 1; display: grid; grid-template-columns: minmax(0, 704fr) minmax(0, 368fr); gap: 3px; }
.col-left { display: flex; flex-direction: column; gap: 3px; padding-left: 1px; }
.viewport { position: relative; flex: 1; background: #3d3d3d; border-radius: 6px; overflow: hidden; border-bottom: 1px solid #4a4a4a; border-top: 1px solid #3e3e3e; }
.scene3d { position: absolute; left: 0; top: 0; }
.viewport > .hdr, .row2, .vbody { position: relative; }
.vhdr { padding: 0 4px 0 8px; gap: 6px; }
.push ~ .grp:last-child { margin-left: -2px; }
.selwrap { display: flex; align-items: center; height: 18px; padding: 0 3px; background: #282828; border-radius: 4px; gap: 4px; color: #e0e0e0; }
.selwrap select { flex: none; }
.selwrap .i8 { margin-left: auto; }
.mode { width: 82px; }
.orient { width: 56px; }
.selwrap.orient { padding: 0 2px; gap: 3px; }
.vmenus { padding: 0 15px 0 5px; }
.row2 { display: flex; justify-content: space-between; height: 23px; }
.selmodes, .options { box-sizing: content-box; background: #303030; }
.selmodes { padding: 2px 7px 3px 8px; border-radius: 0 0 5px 0; }
.selmodes .tool { height: 17px; }
.options { padding: 2px 8px 3px; border-radius: 0 0 0 5px; }
.options button { width: 43px; height: 18px; gap: 6px; background: #282828; border-radius: 4px; color: #e6e6e6; }
.vbody { display: flex; gap: 16px; padding: 8px; }
.toolbar { display: flex; flex-direction: column; gap: 6px; width: 36px; padding-top: 1px; }
.tgroup { display: flex; flex-direction: column; gap: 1px; border-radius: 4px; overflow: hidden; }
.tgroup button { position: relative; height: 30px; background: #282828; }
.tgroup button.on { background: #4772b3; }
.tgroup svg { width: 23px; height: 23px; }
.more::after { content: ""; position: absolute; right: 2px; bottom: 2px; border: 2px solid; border-color: transparent #999 #999 transparent; }
.vinfo { color: #fff; font-weight: 500; line-height: 17px; text-shadow: 0 1px 2px #0008; }
.navgizmo { position: absolute; right: 31px; top: 55px; }
.axis { font: 600 11px Inter, sans-serif; fill: #1a1d22; }
.sidetabs { position: absolute; right: 2px; display: flex; flex-direction: column; gap: 4px; }
.sidetabs.top { top: 52px; }
.sidetabs.bottom { bottom: 44px; }
.sidetabs button { width: 16px; min-height: 35px; writing-mode: vertical-rl; text-orientation: sideways; background: #1d1d1d; border-radius: 4px; color: #a8a8a8; }
.sidetabs .tripo { min-height: 40px; }

.timeline { position: relative; background: #1d1d1d; border-radius: 6px 6px 0 0; overflow: hidden; font-variant-numeric: tabular-nums; }
.thdr { height: 23px; padding: 0 15px 0 8px; gap: 5px; }
.tmenus { padding: 0 6px; }
.playback { width: 44px; height: 18px; gap: 7px; margin-left: 2px; background: #282828; border-radius: 4px; color: #eee; }
.rec { margin-left: 8px; }
.lined .tool + .tool { border-left: 1px solid #484848; }
.frame, .num { background: #545454; border-radius: 4px; text-align: center; color: #e8e8e8; height: 18px; }
.frame { width: 67px; margin-left: 9px; }
.range label { display: flex; width: 80px; background: #545454; border-left: 1px solid #484848; padding: 0 12px 0 14px; white-space: nowrap; color: #eee; }
.range input { flex: 1; width: 10px; text-align: right; }
.ruler { display: flex; margin: 0 21px 0 -8px; height: 22px; }
.ruler li { flex: 1; text-align: center; line-height: 24px; color: #8c8c8c; }
.track { display: flex; align-items: center; height: 10px; color: #888; }
.track .i12 { width: 8px; margin-right: 18px; }
.strip { flex: 1; height: 10px; margin-right: 26px; background: repeating-linear-gradient(90deg, transparent 0 59px, #1b1b1b 59px 60px, transparent 60px 63px), linear-gradient(#2b2b2b 4px, #3f3f3f 4px 8px, #2b2b2b 8px); border-right: 1px solid #111; }
.playhead { position: absolute; left: 289px; top: 25px; width: 27px; height: 30px; background: linear-gradient(#4772b3, #4772b3) center / 2px 100% no-repeat; }
.playhead span { display: block; position: relative; height: 18px; line-height: 18px; border-radius: 3px; background: #4772b3; color: #fff; text-align: center; }
.playhead span::after { content: ""; position: absolute; left: 8px; top: 18px; border: 6px solid transparent; border-top-color: #4772b3; border-bottom: 0; }

.col-right { display: flex; flex-direction: column; gap: 3px; min-width: 0; }
.outliner { position: relative; height: 144px; overflow: hidden; background: #282828; border-radius: 6px; border-top: 1px solid #383838; }
.ohdr { background: #282828; padding: 0 8px 0 9px; gap: 6px; justify-content: space-between; }
.ohdr .dd.line:nth-child(2) { margin-right: auto; }
.search { display: flex; align-items: center; gap: 6px; width: 108px; height: 17px; padding-left: 4px; background: #1d1d1d; border-radius: 4px; box-shadow: 0 0 0 1px #333; }
.search input { flex: 1; }
.search input::placeholder { color: #6a6a6a; opacity: 1; }
.ohdr .search { margin-right: 74px; }
.ohr { display: flex; gap: 4px; }
.ohr .dd { width: 30px; }
.solo { border-radius: 4px; }
.tree { padding-top: 1px; }
.tree li { display: flex; align-items: center; height: 18px; padding-right: 11px; color: #c4c4c4; white-space: nowrap; }
.tree li:nth-child(even) { background: #2b2b2b; }
.tree i { display: flex; align-items: center; justify-content: center; width: 18px; height: 18px; border-radius: 4px; }
.tree i.act { background: #4d4d4d; }
.tree svg { color: #e0e0e0; }
.tree .tw { color: #aaa; }
.tree .orange svg { color: #d98a4e; }
.tree .teal svg { color: #17a586; }
.tree .bluei svg { color: #5b7fd0; }
.tree .hot { color: #fff; }
.d0 { padding-left: 21px; gap: 5px; }
.d1 { padding-left: 23px; gap: 4px; }
.d2 { padding-left: 41px; gap: 4px; }
.tree .d2 > span + i { margin-left: 13px; }
.tree .d2 > .bluei { margin-left: 15px; }
.tree .d2 > .tight { margin-left: -4px; }
.tog { display: flex; align-items: center; gap: 4px; margin-left: auto; }
.tog svg { width: 14px; height: 14px; }
.tog input { appearance: none; display: grid; place-content: center; width: 10px; height: 10px; margin-right: 2px; background: #e6e6e6; border-radius: 1px; }
.tog input::before { content: ""; width: 4px; height: 7px; margin-bottom: 1px; border: solid #222; border-width: 0 1px 1px 0; transform: rotate(40deg); }
.ghost { opacity: .5; }
.guide { position: absolute; left: 27px; top: 65px; width: 1px; height: 46px; background: #555; }
.scroll { position: absolute; right: 3px; top: 25px; width: 4px; height: 26px; border-radius: 2px; background: #434343; }

.properties { flex: 1; display: flex; flex-direction: column; background: #303030; border-radius: 6px; overflow: hidden; }
.phdr { padding: 0 9px; justify-content: space-between; }
.phdr .search { margin-right: 8px; }
.phdr .dd { color: #c8c8c8; }
.phdr .line { border-radius: 4px; }
.pmain { flex: 1; display: flex; }
.ptabs { width: 28px; background: #191919; }
.pbody { flex: 1; min-width: 0; padding: 8px 8px 8px 7px; }
.crumbs { display: flex; align-items: center; gap: 8px; height: 18px; padding: 0 2px; color: #dcdcdc; }
.crumbs .obj { margin-right: 5px; }
.crumbs .i12 { margin-right: -2px; }
.pinr { margin-left: auto; color: #999; }
.addmod { position: relative; width: 100%; height: 17px; margin: 16px 0 9px; padding-left: 16px; background: #545454; border-radius: 4px; color: #e6e6e6; }
.addmod svg { position: absolute; left: 5px; }
.modifier { padding: 3px 7px 8px; background: #3d3d3d; border: 1px solid #3c5f94; border-radius: 5px; }
.mhead { display: flex; align-items: center; gap: 3px; height: 18px; }
.mname { flex: 1; margin-left: 6px; }
.mname input { flex: 1; background: #1d1d1d; padding: 0 7px; color: #eee; }
.bare { width: 12px; margin: 0 8px 0 2px; }
.grip { width: 12px; height: 6px; }
.seg { display: flex; gap: 1px; margin: 10px 0 5px; height: 17px; border-radius: 4px; overflow: hidden; }
.seg button { flex: 1; background: #545454; color: #e0e0e0; }
.seg .on { background: #4772b3; color: #fff; }
.prow { display: grid; grid-template-columns: 112px minmax(0, 1fr) 10px; gap: 9px; align-items: center; margin-bottom: 3px; color: #dcdcdc; line-height: 17px; }
.prow > label:first-child { text-align: right; }
.prow .num { width: 100%; height: 17px; }
.prow b { width: 3px; height: 3px; border-radius: 2px; background: #e0e0e0; }
.prow.chk { margin: 5px 0 0; }
.check { display: flex; align-items: center; gap: 3px; }
.check input { appearance: none; display: grid; place-content: center; width: 12px; height: 12px; border-radius: 2px; background: #545454; flex: none; }
.check input:checked { background: #4772b3; }
.check input:checked::before { content: ""; width: 5px; height: 8px; margin-bottom: 2px; border: solid #fff; border-width: 0 2px 2px 0; transform: rotate(42deg); }

.statusbar { display: flex; align-items: center; justify-content: flex-end; gap: 5px; height: 22px; padding-right: 10px; color: #7a7a7a; }
.bar { width: 1px; height: 10px; background: #555; }

.dialog { position: absolute; left: 198px; top: 157px; width: 534px; background: #181818; border: 1px solid #222; border-radius: 5px; box-shadow: 0 2px 8px #0009; padding-bottom: 5px; color: #8f8f8f; }
.dialog h2 { margin: 0 6px; padding: 5px 0 4px; border-bottom: 1px solid #2b2b2b; line-height: 19px; color: #f0f0f0; white-space: nowrap; }
.dialog h3 { display: flex; align-items: center; gap: 1px; height: 26px; padding-left: 9px; }
.rows { display: flex; flex-direction: column; gap: 5px; padding: 5px 6px 4px; background: #1a1c1b; }
.rows.intro { background: none; padding: 11px 6px 0; }
.frow { display: grid; grid-template-columns: 203px minmax(0, 1fr); gap: 9px; }
.frow > label { text-align: right; }
.sel { position: relative; display: flex; height: 18px; background: #282828; border-radius: 4px; box-shadow: inset 0 0 0 1px #3a3a3a; }
.sel select { width: 100%; padding: 0 7px; color: #e6e6e6; }
.sel svg { position: absolute; right: 3px; top: 5px; color: #ddd; }
.mnemonic::after { content: ""; position: absolute; left: 7px; bottom: 3px; width: 6px; height: 1px; background: #ddd; }
.dialog .check { height: 18px; margin-left: 212px; }
.lit { color: #f0f0f0; }
.actions { display: grid; grid-template-columns: 1fr 1fr; gap: 8px; padding: 5px 6px 0; }
.actions button { height: 18px; background: #545454; border-radius: 4px; color: #e6e6e6; white-space: pre; }
.actions .primary { background: #4772b3; color: #fff; }
.actions u { text-decoration-skip-ink: none; text-underline-offset: 2px; }

.watermark { position: absolute; right: 9px; bottom: 10px; display: flex; align-items: center; gap: 7px; color: #fff; font: 18px/26px "Noto Sans CJK SC", sans-serif; }
.badge { width: 24px; height: 24px; border-radius: 50%; background: #fff; color: #181818; line-height: 23px; text-align: center; }
```
